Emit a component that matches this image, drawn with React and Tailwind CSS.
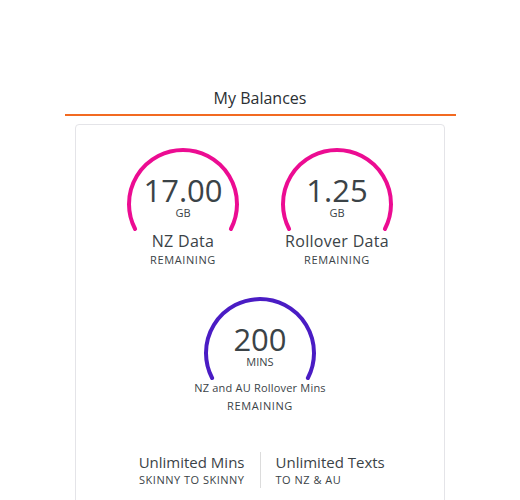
const font = { fontFamily: '"Open Sans", "Liberation Sans", sans-serif' };

const Gauge = ({ value, unit, color }) => (
  <div className="relative w-[120px] h-[82px]">
    <svg className="absolute inset-0 overflow-visible" width="120" height="82" viewBox="0 0 120 82">
      <path
        d="M 12.1 81 A 54 54 0 1 1 107.9 81"
        fill="none"
        stroke={color}
        strokeWidth="4"
        strokeLinecap="round"
      />
    </svg>
    <div className="relative flex flex-col items-center pt-[26px]">
      <div className="text-[31px] leading-[33px] text-[#3b4347]">{value}</div>
      <div className="text-[11px] leading-[11px] font-medium text-[#3b4347]">{unit}</div>
    </div>
  </div>
);

const Balance = ({ value, unit, color, label, small }) => (
  <div className="flex flex-col items-center">
    <Gauge value={value} unit={unit} color={color} />
    <div className={small ? "text-[11px] leading-[18px] text-[#3b4347] tracking-[0.2px]" : "text-[16px] leading-[22px] text-[#3b4347] tracking-[0.3px]"}>
      {label}
    </div>
    <div className={small ? "text-[11px] leading-[18px] font-medium text-[#3b4347] tracking-[0.6px]" : "text-[11px] leading-[16px] font-medium text-[#3b4347] tracking-[0.6px]"}>
      REMAINING
    </div>
  </div>
);

export default function App() {
  return (
    <div className="w-[520px] h-[500px] bg-white overflow-hidden flex flex-col items-center" style={font}>
      <div className="mt-[86px] w-[391px] text-center text-[16px] leading-6 text-[#2b2f33] pb-[4px] border-b-2 border-[#f26a21]">
        My Balances
      </div>
      <div className="mt-[8px] w-[370px] border border-[#e4e4e8] rounded-[4px] pt-[23px] pb-6 flex flex-col items-center">
        <div className="flex gap-[34px]">
          <Balance value="17.00" unit="GB" color="#ec0c92" label="NZ Data" />
          <Balance value="1.25" unit="GB" color="#ec0c92" label="Rollover Data" />
        </div>
        <div className="mt-[29px]">
          <Balance value="200" unit="MINS" color="#4a1cc4" label="NZ and AU Rollover Mins" small />
        </div>
        <div className="mt-[37px] flex w-full">
          <div className="flex-1 flex flex-col items-end pr-[15px] text-right">
            <div className="text-[15px] leading-[20px] text-[#3b4347]">Unlimited Mins</div>
            <div className="text-[11px] leading-[16px] font-medium text-[#3b4347] tracking-[0.5px]">SKINNY TO SKINNY</div>
          </div>
          <div className="w-px bg-[#dcdcdc]" />
          <div className="flex-1 flex flex-col items-start pl-[15px]">
            <div className="text-[15px] leading-[20px] text-[#3b4347]">Unlimited Texts</div>
            <div className="text-[11px] leading-[16px] font-medium text-[#3b4347] tracking-[0.5px]">TO NZ &amp; AU</div>
          </div>
        </div>
      </div>
    </div>
  );
}
